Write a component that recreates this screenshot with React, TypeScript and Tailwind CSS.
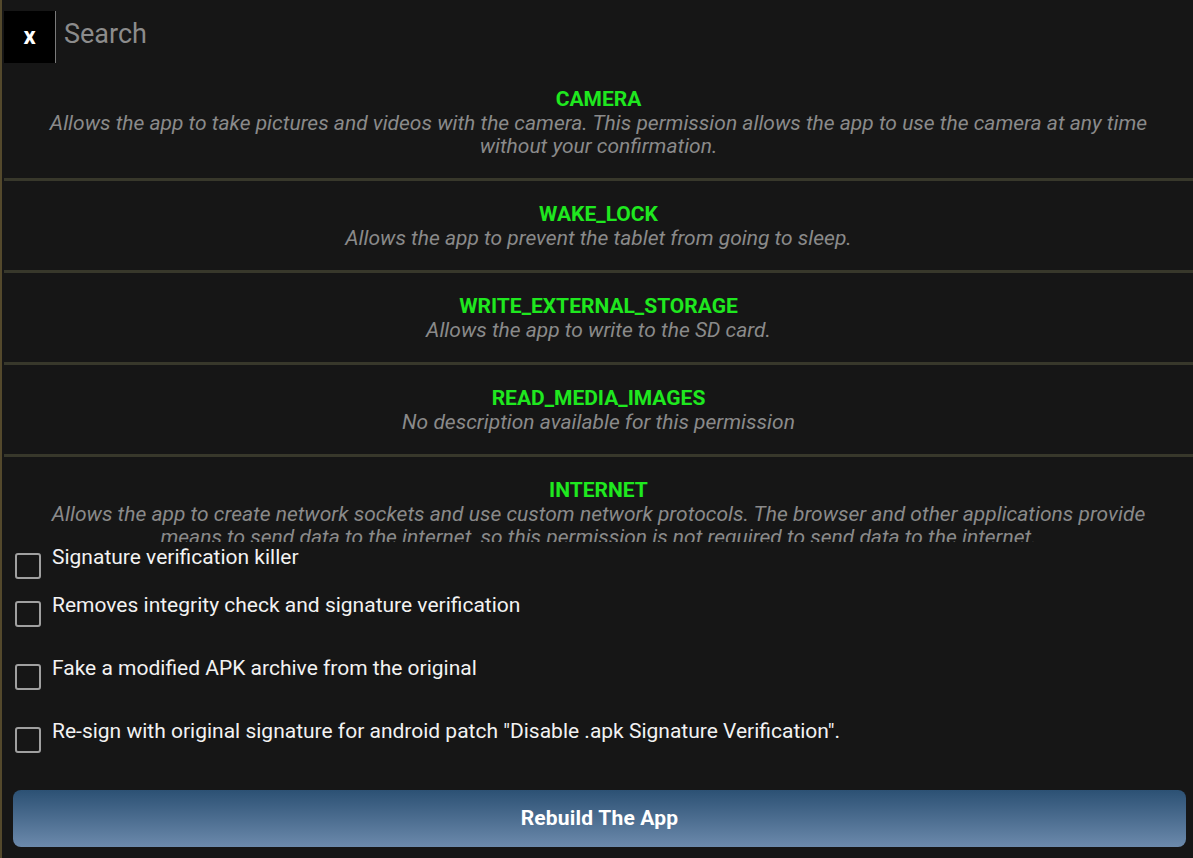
import React from "react";

const permissions = [
  {
    name: "CAMERA",
    desc: "Allows the app to take pictures and videos with the camera. This permission allows the app to use the camera at any time without your confirmation.",
  },
  { name: "WAKE_LOCK", desc: "Allows the app to prevent the tablet from going to sleep." },
  { name: "WRITE_EXTERNAL_STORAGE", desc: "Allows the app to write to the SD card." },
  { name: "READ_MEDIA_IMAGES", desc: "No description available for this permission" },
  {
    name: "INTERNET",
    desc: "Allows the app to create network sockets and use custom network protocols. The browser and other applications provide means to send data to the internet, so this permission is not required to send data to the internet.",
  },
];

const options = [
  { label: "Signature verification killer", mt: "mt-0" },
  { label: "Removes integrity check and signature verification", mt: "mt-[14px]" },
  { label: "Fake a modified APK archive from the original", mt: "mt-[29px]" },
  {
    label: 'Re-sign with original signature for android patch "Disable .apk Signature Verification".',
    mt: "mt-[29px]",
  },
];

export default function App() {
  return (
    <div className="h-[858px] w-full overflow-hidden bg-[#161616] border-l-2 border-[#54492c] flex flex-col font-['Roboto',sans-serif]">
      {/* Search bar */}
      <div className="flex items-center pt-[11px] pl-[2px]">
        <div className="w-[52px] h-[52px] bg-black border-r border-[#7a7a7a] flex items-center justify-center text-white font-bold text-[24px] leading-none pb-[2px]">
          x
        </div>
        <span className="ml-[8px] text-[27px] text-[#8c8c8c] leading-none pb-[6px]">Search</span>
      </div>

      {/* Permission list */}
      <div className="mt-[3px] h-[476px] overflow-hidden pl-[2px]">
        {permissions.map((p, i) => (
          <div key={p.name}>
            {i > 0 && <div className="h-[3px] bg-[#38382b]" />}
            <div className="pt-[21px] pb-[20px] px-[20px] text-center">
              <div className="text-[21px] leading-[24px] font-bold text-[#1fe81f]">{p.name}</div>
              <div className="mt-[1px] text-[21px] leading-[23px] italic text-[#8a8a8a]">{p.desc}</div>
            </div>
          </div>
        ))}
      </div>

      {/* Options */}
      <div className="mt-[3px] pl-[13px]">
        {options.map((o) => (
          <label key={o.label} className={`flex items-start ${o.mt}`}>
            <span className="mt-[8px] w-[26px] h-[26px] shrink-0 rounded-[3px] border-2 border-[#a0a0a0]" />
            <span className="ml-[11px] text-[21px] leading-[24px] text-[#f2f2f2]">{o.label}</span>
          </label>
        ))}
      </div>

      {/* Rebuild button */}
      <button className="mt-[37px] ml-[11px] mr-[7px] h-[57px] rounded-[8px] bg-gradient-to-b from-[#2c5174] to-[#6c8aac] text-white font-bold text-[21px] tracking-[0.2px]">
        Rebuild The App
      </button>
    </div>
  );
}
